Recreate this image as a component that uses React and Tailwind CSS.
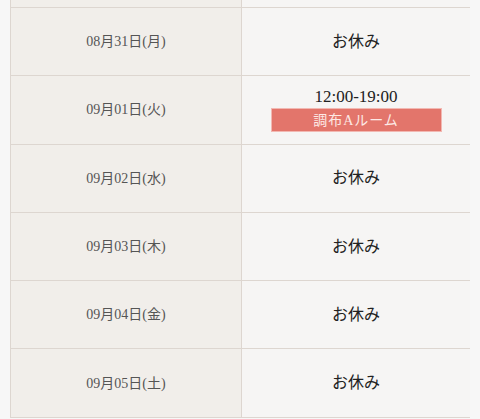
const rows = [
  { date: "08月31日(月)" },
  { date: "09月01日(火)", time: "12:00-19:00", room: "調布Aルーム" },
  { date: "09月02日(水)" },
  { date: "09月03日(木)" },
  { date: "09月04日(金)" },
  { date: "09月05日(土)" },
]

export default function App() {
  return (
    <div className="h-[419px] w-[480px] overflow-hidden bg-[#f7f7f7] pl-[10px] pr-[10px]" style={{ fontFamily: '"Liberation Serif", "Noto Sans CJK JP", serif' }}>
      <div className="h-[7px] flex">
        <div className="w-[231px] bg-[#f1eeea] border-l border-[#ddd6d0]"></div>
        <div className="flex-1 bg-[#f6f5f4] border-l border-[#ddd6d0]"></div>
      </div>
      <div className="border-t border-[#ddd6d0]">
        {rows.map((r) => (
          <div key={r.date} className="flex h-[68.3px] border-b border-[#ddd6d0]">
            <div className="w-[231px] flex items-center justify-center bg-[#f1eeea] border-l border-[#ddd6d0] text-[14px] text-[#555]">
              {r.date}
            </div>
            <div className="flex-1 flex flex-col items-center justify-center bg-[#f6f5f4] border-l border-[#ddd6d0] text-[#222]">
              {r.time ? (
                <>
                  <div className="text-[17px] leading-[20px]">{r.time}</div>
                  <div className="mt-[1px] w-[171px] h-[24px] border border-[#f2b8b2] bg-[#e3756b] flex items-center justify-center text-[14px] text-[#fde9e5] tracking-[1px]">
                    {r.room}
                  </div>
                </>
              ) : (
                <div className="text-[16px]">お休み</div>
              )}
            </div>
          </div>
        ))}
      </div>
    </div>
  )
}
